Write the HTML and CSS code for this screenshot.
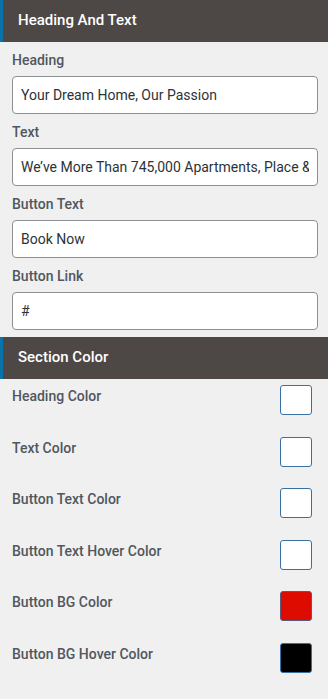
FILE: index.html
```html
<!DOCTYPE html>
<html lang="en">
<head>
    <meta charset="UTF-8">
    <meta name="viewport" content="width=device-width, initial-scale=1.0">
    <title>Section Settings</title>
    <link rel="stylesheet" href="styles.css">
</head>
<body>
    <div class="panel">
        <div class="panel-title">Heading And Text</div>
        <div class="fields">
            <div class="field">
                <label for="heading">Heading</label>
                <input id="heading" type="text" value="Your Dream Home, Our Passion">
            </div>
            <div class="field">
                <label for="text">Text</label>
                <input id="text" type="text" value="We’ve More Than 745,000 Apartments, Place &amp; Plots.">
            </div>
            <div class="field">
                <label for="btn-text">Button Text</label>
                <input id="btn-text" type="text" value="Book Now">
            </div>
            <div class="field">
                <label for="btn-link">Button Link</label>
                <input id="btn-link" type="text" value="#">
            </div>
        </div>

        <div class="panel-title">Section Color</div>
        <div class="colors">
            <div class="color-row">
                <span class="color-label">Heading Color</span>
                <button class="swatch white"></button>
            </div>
            <div class="color-row">
                <span class="color-label">Text Color</span>
                <button class="swatch white"></button>
            </div>
            <div class="color-row">
                <span class="color-label">Button Text Color</span>
                <button class="swatch white"></button>
            </div>
            <div class="color-row">
                <span class="color-label">Button Text Hover Color</span>
                <button class="swatch white"></button>
            </div>
            <div class="color-row">
                <span class="color-label">Button BG Color</span>
                <button class="swatch red"></button>
            </div>
            <div class="color-row">
                <span class="color-label">Button BG Hover Color</span>
                <button class="swatch black"></button>
            </div>
        </div>
    </div>
</body>
</html>
```

FILE: styles.css
```css
body,
html {
    margin: 0;
    background-color: #f0f0f0;
    font-family: Roboto, "Liberation Sans", sans-serif;
    font-size: 14px;
}

.panel-title {
    background-color: #4d4846;
    border-left: 3px solid #0a73aa;
    color: #fff;
    font-size: 15px;
    font-weight: 500;
    height: 42px;
    line-height: 40px;
    padding-left: 15px;
}

.fields {
    padding: 8px 10px 7px 12px;
}

.field label {
    display: block;
    color: #50575e;
    font-weight: 500;
    line-height: 20px;
    margin-bottom: 6px;
}

.field input {
    box-sizing: border-box;
    width: 100%;
    height: 38px;
    margin: 0 0 8px;
    padding: 0 8px;
    border: 1px solid #8c8f94;
    border-radius: 4px;
    background: #fff;
    color: #2c3338;
    font-family: inherit;
    font-size: 14px;
    outline: 0;
}

.field:last-child input {
    margin-bottom: 0;
}

.colors {
    padding: 6px 16px 0 12px;
}

.color-row {
    display: flex;
    justify-content: space-between;
    align-items: flex-start;
    height: 51.6px;
}

.color-label {
    color: #50575e;
    font-weight: 500;
    line-height: 20px;
    margin-top: 1px;
}

.swatch {
    width: 32px;
    height: 30px;
    padding: 0;
    border: 1px solid #3b6fa3;
    border-radius: 3px;
}

.swatch.white {
    background: #fff;
}

.swatch.red {
    background: #dd0b00;
    border-color: #5b5a7d;
}

.swatch.black {
    background: #000;
}
```
